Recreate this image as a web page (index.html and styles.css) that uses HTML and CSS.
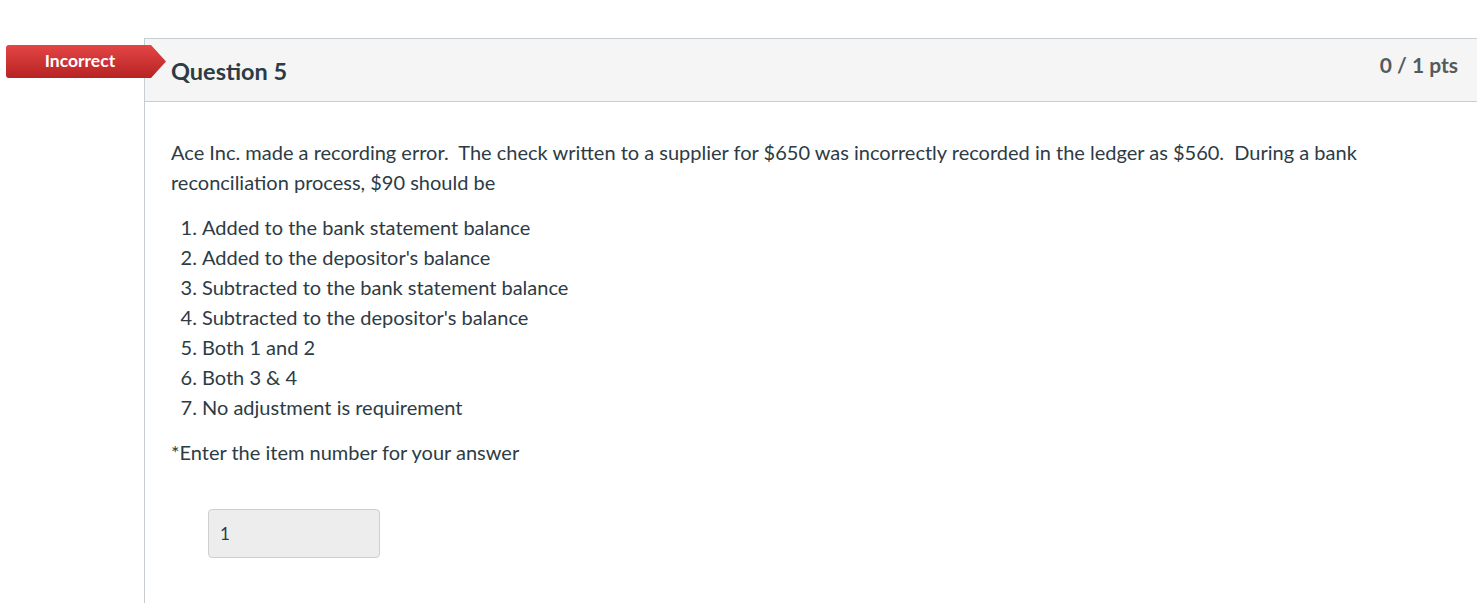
FILE: index.html
```html
<!DOCTYPE html>
<html>
<head>
<meta charset="utf-8">
<link rel="stylesheet" href="styles.css">
</head>
<body>
<div class="page">
  <div class="badge"><span>Incorrect</span></div>
  <div class="question">
    <div class="header">
      <h2 class="title">Question 5</h2>
      <div class="pts">0 / 1 pts</div>
    </div>
    <div class="content">
      <p class="text">Ace Inc. made a recording error.&nbsp; The check written to a supplier for $650 was incorrectly recorded in the ledger as $560.&nbsp; During a bank reconciliation process, $90 should be</p>
      <ol class="options">
        <li>Added to the bank statement balance</li>
        <li>Added to the depositor's balance</li>
        <li>Subtracted to the bank statement balance</li>
        <li>Subtracted to the depositor's balance</li>
        <li>Both 1 and 2</li>
        <li>Both 3 &amp; 4</li>
        <li>No adjustment is requirement</li>
      </ol>
      <p class="text">*Enter the item number for your answer</p>
      <div class="answer"><input class="answer-input" type="text" value="1" readonly></div>
    </div>
  </div>
</div>
</body>
</html>
```
FILE: styles.css
```css
html, body {
  margin: 0;
  padding: 0;
  background: #fff;
}
body {
  font-family: Lato, "Liberation Sans", sans-serif;
  color: #2d3b45;
  overflow: hidden;
}
.page {
  position: relative;
  padding: 38px 0 0 144px;
  height: 565px;
}
.badge {
  position: absolute;
  left: 6px;
  top: 45px;
  width: 160px;
  height: 33px;
  background: linear-gradient(#e44545, #b72323);
  clip-path: polygon(0 0, 145px 0, 160px 50%, 145px 100%, 0 100%);
  border-radius: 3px 0 0 3px;
  display: flex;
  align-items: center;
}
.badge span {
  width: 148px;
  text-align: center;
  color: #fff;
  font-weight: 700;
  font-size: 17.5px;
  margin-top: -2px;
}
.question {
  border-left: 1px solid #c7cdd1;
  border-top: 1px solid #c7cdd1;
  height: 565px;
  margin-right: -2px;
}
.header {
  background: #f5f5f5;
  border-bottom: 1px solid #c7cdd1;
  height: 62px;
  display: flex;
  justify-content: space-between;
  align-items: flex-start;
  padding: 0 21px 0 26px;
}
.title {
  margin: 18px 0 0;
  font-size: 23.5px;
  font-weight: 700;
  color: #2d3b45;
}
.pts {
  margin-top: 13px;
  font-size: 21px;
  font-weight: 700;
  color: #555a5e;
}
.content {
  padding: 35px 26px 0;
}
.text {
  margin: 0;
  font-size: 20px;
  line-height: 30px;
  max-width: 1200px;
}
.options {
  margin: 15px 0;
  padding-left: 31px;
  font-size: 20px;
  line-height: 30px;
}
.answer {
  padding: 42px 0 0 37px;
}
.answer-input {
  box-sizing: border-box;
  width: 172px;
  height: 49px;
  background: #ededed;
  border: 1px solid #cfcfcf;
  border-radius: 4px;
  padding: 0 11px;
  font-family: Lato, sans-serif;
  font-size: 17px;
  color: #2d3b45;
  margin: 0;
}
```
